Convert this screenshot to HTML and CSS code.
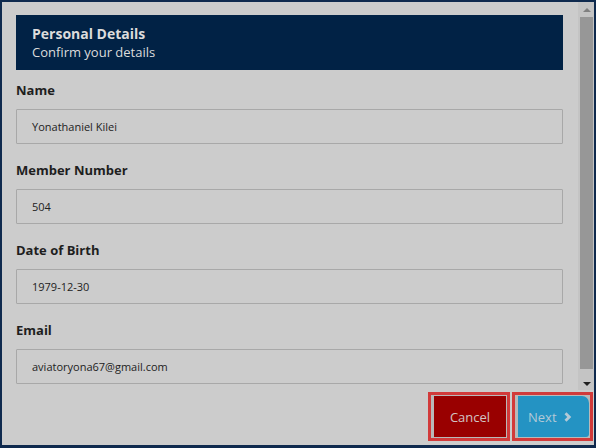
FILE: index.html
```html
<!DOCTYPE html>
<html>
<head>
<meta charset="utf-8">
<link rel="stylesheet" href="styles.css">
</head>
<body>
<div class="frame">
  <div class="scroll-area">
    <div class="content">
      <div class="header">
        <div class="title">Personal Details</div>
        <div class="subtitle">Confirm your details</div>
      </div>
      <div class="field">
        <div class="label">Name</div>
        <div class="input">Yonathaniel Kilei</div>
      </div>
      <div class="field">
        <div class="label">Member Number</div>
        <div class="input">504</div>
      </div>
      <div class="field">
        <div class="label">Date of Birth</div>
        <div class="input">1979-12-30</div>
      </div>
      <div class="field">
        <div class="label">Email</div>
        <div class="input">aviatoryona67@gmail.com</div>
      </div>
    </div>
    <div class="scrollbar">
      <div class="arrow up"></div>
      <div class="thumb"></div>
      <div class="arrow down"></div>
    </div>
  </div>
  <div class="footer">
    <div class="focus-ring">
      <div class="btn cancel">Cancel</div>
    </div>
    <div class="focus-ring">
      <div class="btn next">Next <svg class="chev" width="8" height="10" viewBox="0 0 8 10"><path d="M1.5 1.2 L5.3 5 L1.5 8.8" fill="none" stroke="currentColor" stroke-width="2.8"/></svg></div>
    </div>
  </div>
</div>
</body>
</html>
```
FILE: styles.css
```css
* { box-sizing: border-box; }
html, body { margin: 0; padding: 0; }
body {
  width: 596px;
  height: 448px;
  font-family: "Open Sans", "Noto Sans", sans-serif;
  background: #cccccc;
  overflow: hidden;
}
.frame {
  width: 596px;
  height: 448px;
  border: 2px solid #0f2a4e;
  border-bottom: 3px solid #0f2a4e;
  background: #cccccc;
  display: grid;
  grid-template-rows: 388px 1fr;
}
.scroll-area {
  display: flex;
  overflow: hidden;
}
.content {
  flex: 1;
  padding: 13px 15px 0 14px;
  overflow: hidden;
}
.header {
  background: #012245;
  height: 55px;
  padding: 10px 16px 0 16px;
  color: #dcdcdc;
}
.title {
  font-weight: bold;
  font-size: 14px;
  line-height: 18px;
}
.subtitle {
  font-size: 13px;
  line-height: 18px;
}
.field {
  margin-top: 10px;
}
.field + .field { margin-top: 16px; }
.label {
  font-weight: bold;
  font-size: 13px;
  line-height: 20px;
  color: #1e1e1e;
  margin-bottom: 9px;
}
.input {
  height: 35px;
  border: 1px solid #a8a8a8;
  border-radius: 1px;
  padding: 0 15px;
  font-size: 11px;
  line-height: 33px;
  color: #222;
  background: #cccccc;
}
.scrollbar {
  width: 16px;
  background: #c4c4c4;
  display: flex;
  flex-direction: column;
  align-items: center;
  padding: 0 1px 0 2px;
}
.arrow {
  height: 15px;
  width: 100%;
  position: relative;
}
.arrow.up::after, .arrow.down::after {
  content: "";
  position: absolute;
  left: 3px;
  border-left: 4px solid transparent;
  border-right: 4px solid transparent;
}
.arrow.up::after {
  top: 6px;
  border-bottom: 4px solid #808080;
}
.arrow.down::after {
  top: 7px;
  border-top: 4px solid #202020;
}
.thumb {
  width: 100%;
  flex: 1;
  background: #979797;
  margin-bottom: 6px;
}
.footer {
  display: flex;
  justify-content: flex-end;
  align-items: flex-start;
  gap: 2px;
  padding: 2px 1px 0 0;
}
.focus-ring {
  border: 3px solid #d23a3a;
  height: 49px;
  padding: 1px 1px 1px 3px;
  background: #b9b9b9;
}
.btn {
  height: 100%;
  display: flex;
  align-items: center;
  font-size: 13px;
}
.cancel {
  width: 72px;
  justify-content: center;
  background: #990000;
  color: #d2c4c4;
  padding-top: 1px;
}
.next {
  width: 71px;
  justify-content: flex-start;
  background: #2493c3;
  color: #b3c9d6;
  border-radius: 0 7px 3px 0;
  gap: 7px;
  padding-left: 10px;
  padding-top: 1px;
}
.chev { display: block; margin-top: -1px; }
```
